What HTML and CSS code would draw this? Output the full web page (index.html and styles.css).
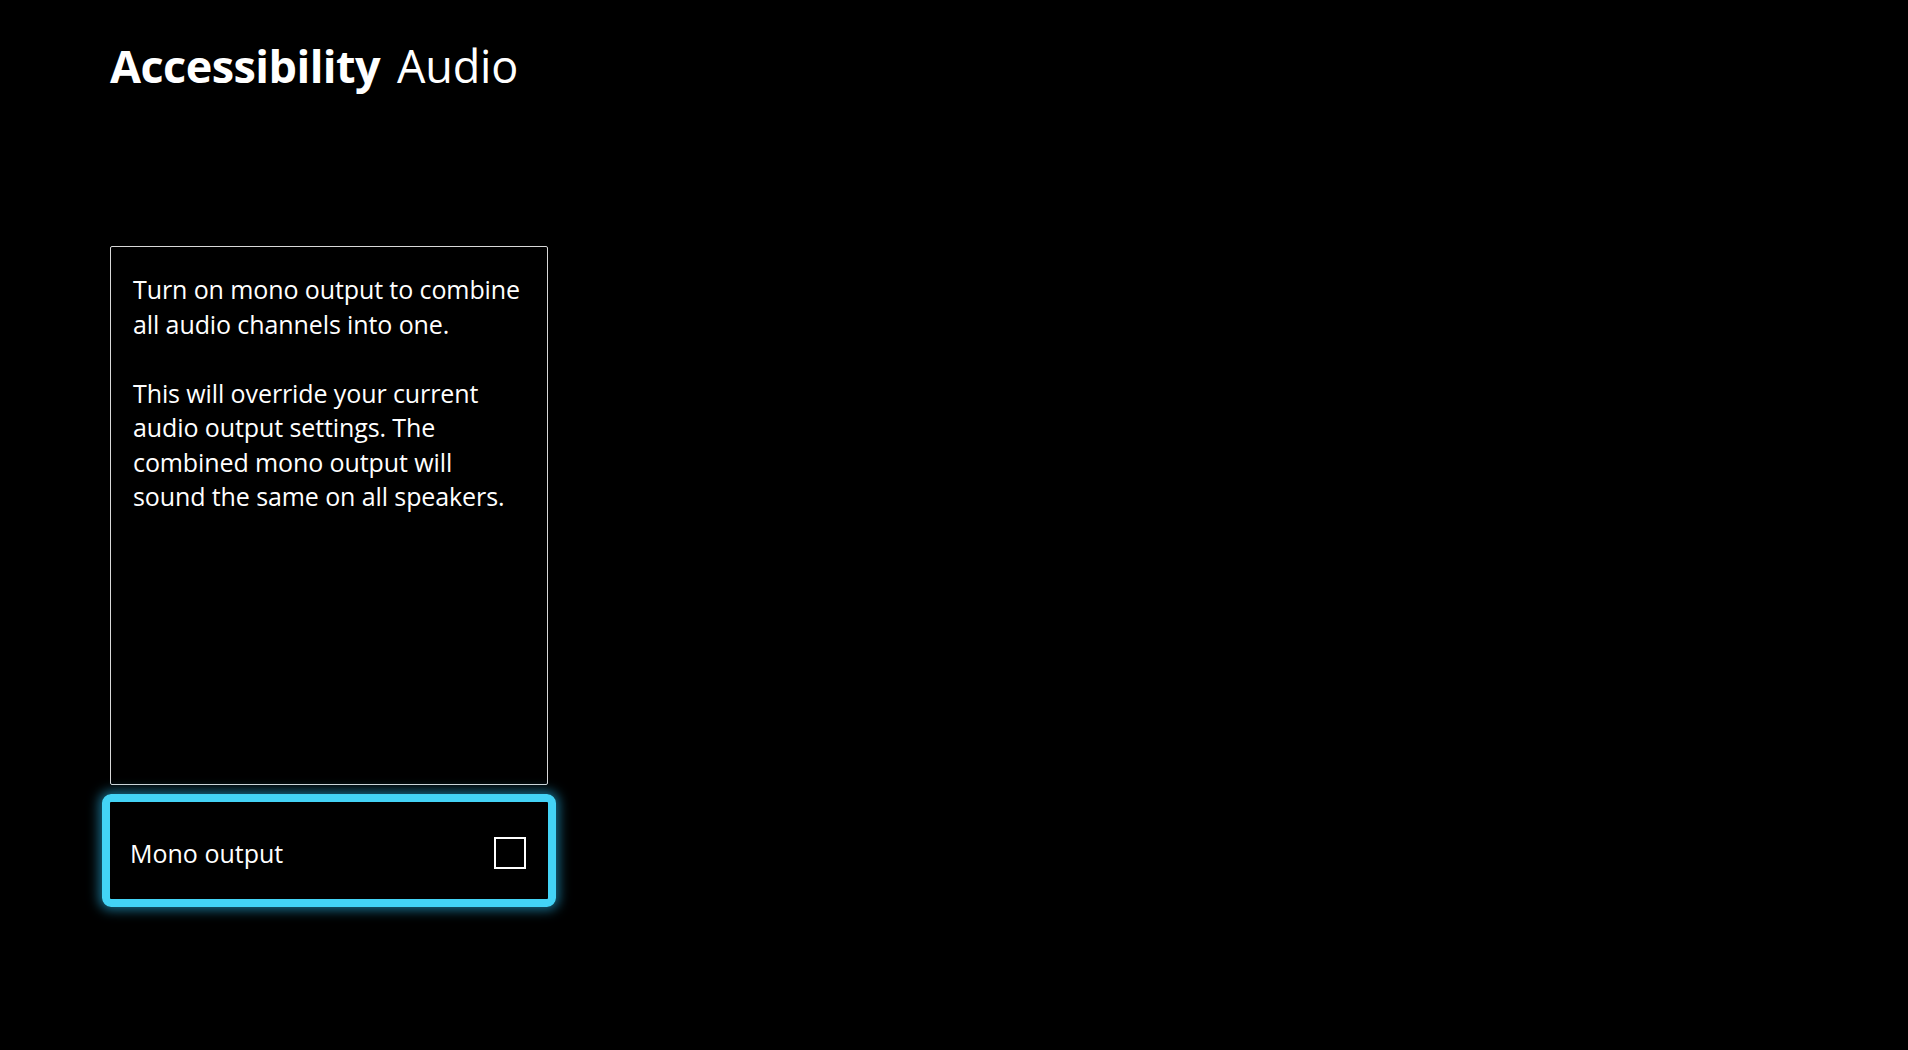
FILE: index.html
```html
<!DOCTYPE html>
<html lang="en">
<head>
<meta charset="utf-8">
<title>Accessibility Audio</title>
<link rel="stylesheet" href="styles.css">
</head>
<body>
<main class="page">
  <h1 class="title"><span class="title-strong">Accessibility</span><span class="title-light">Audio</span></h1>
  <section class="column">
    <div class="info-panel">
      <p>Turn on mono output to combine all audio channels into one.</p>
      <p>This will override your current audio output settings. The combined mono output will sound the same on all speakers.</p>
    </div>
    <div class="toggle-row">
      <span class="toggle-label">Mono output</span>
      <span class="checkbox"></span>
    </div>
  </section>
</main>
</body>
</html>
```
FILE: styles.css
```css
html, body {
  margin: 0;
  padding: 0;
  background: #000;
  color: #fff;
  height: 100%;
}
body {
  font-family: "Open Sans", "Noto Sans", sans-serif;
}
.page {
  padding: 0 0 0 110px;
  width: 1798px;
  height: 1050px;
  box-sizing: border-box;
  overflow: hidden;
}
.title {
  margin: 0;
  padding-top: 38px;
  font-size: 45px;
  line-height: 56px;
  display: flex;
  gap: 17px;
  letter-spacing: -0.55px;
}
.title-strong {
  font-weight: 700;
}
.title-light {
  font-weight: 400;
  letter-spacing: -0.2px;
}
.column {
  margin-top: 152px;
  width: 438px;
  display: flex;
  flex-direction: column;
  gap: 9px;
}
.info-panel {
  box-sizing: border-box;
  height: 539px;
  border: 1px solid #d8d8d8;
  border-radius: 2px;
  padding: 25px 24px 0 22px;
  font-size: 25px;
  line-height: 34.5px;
  letter-spacing: -0.1px;
}
.info-panel p {
  margin: 0 0 34.5px 0;
}
.toggle-row {
  box-sizing: border-box;
  margin-left: -8px;
  width: 454px;
  height: 113px;
  border: 8px solid #43d3f6;
  border-radius: 9px;
  box-shadow: 0 0 12px 3px rgba(40, 180, 230, 0.6);
  display: flex;
  align-items: center;
  justify-content: space-between;
  padding: 4px 22px 0 20px;
}
.toggle-label {
  font-size: 25px;
  line-height: 34px;
}
.checkbox {
  width: 32px;
  height: 32px;
  box-sizing: border-box;
  border: 2px solid #fff;
}
```
